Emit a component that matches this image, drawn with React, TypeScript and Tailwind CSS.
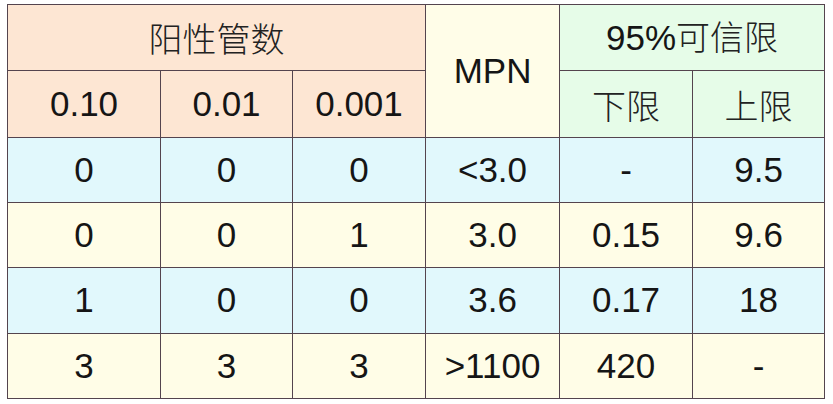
import React from 'react';

const rows = [
  { a: '0', b: '0', c: '0', mpn: '<3.0', lo: '-', hi: '9.5', bg: 'bg-[#e1f8fc]' },
  { a: '0', b: '0', c: '1', mpn: '3.0', lo: '0.15', hi: '9.6', bg: 'bg-[#fffde7]' },
  { a: '1', b: '0', c: '0', mpn: '3.6', lo: '0.17', hi: '18', bg: 'bg-[#e1f8fc]' },
  { a: '3', b: '3', c: '3', mpn: '>1100', lo: '420', hi: '-', bg: 'bg-[#fffde7]' },
];

const heights = ['h-[65px]', 'h-[65px]', 'h-[66px]', 'h-[65px]'];

const cell = 'border border-[#54444e] text-center align-middle p-0';
const num = "font-['Liberation_Sans',Arial,sans-serif] text-[35px] text-[#151515]";
const cjk = "font-['Noto_Sans_CJK_SC',sans-serif] font-light text-[34px] text-[#222]";

const App: React.FC = () => {
  return (
    <div className="w-[833px] h-[404px] bg-white pt-[4px] pl-[7px]">
      <table className="table-fixed border-collapse w-[817px]">
        <colgroup>
          <col className="w-[153px]" />
          <col className="w-[132px]" />
          <col className="w-[133px]" />
          <col className="w-[134px]" />
          <col className="w-[133px]" />
          <col className="w-[132px]" />
        </colgroup>
        <tbody>
          {/* header row 1 */}
          <tr className="h-[66px]">
            <td colSpan={3} className={`${cell} ${cjk} bg-[#fde6d3]`}>
              阳性管数
            </td>
            <td rowSpan={2} className={`${cell} ${num} bg-[#fffde8]`}>
              MPN
            </td>
            <td colSpan={2} className={`${cell} bg-[#e6fce8]`}>
              <span className={num}>95%</span>
              <span className={cjk}>可信限</span>
            </td>
          </tr>
          {/* header row 2 */}
          <tr className="h-[67px]">
            <td className={`${cell} ${num} bg-[#fde6d3]`}>0.10</td>
            <td className={`${cell} ${num} bg-[#fde6d3]`}>0.01</td>
            <td className={`${cell} ${num} bg-[#fde6d3]`}>0.001</td>
            <td className={`${cell} ${cjk} bg-[#e6fce8]`}>下限</td>
            <td className={`${cell} ${cjk} bg-[#e6fce8]`}>上限</td>
          </tr>
          {rows.map((r, i) => (
            <tr key={i} className={`${heights[i]} ${r.bg}`}>
              <td className={`${cell} ${num}`}>{r.a}</td>
              <td className={`${cell} ${num}`}>{r.b}</td>
              <td className={`${cell} ${num}`}>{r.c}</td>
              <td className={`${cell} ${num}`}>{r.mpn}</td>
              <td className={`${cell} ${num}`}>{r.lo}</td>
              <td className={`${cell} ${num}`}>{r.hi}</td>
            </tr>
          ))}
        </tbody>
      </table>
    </div>
  );
};

export default App;
